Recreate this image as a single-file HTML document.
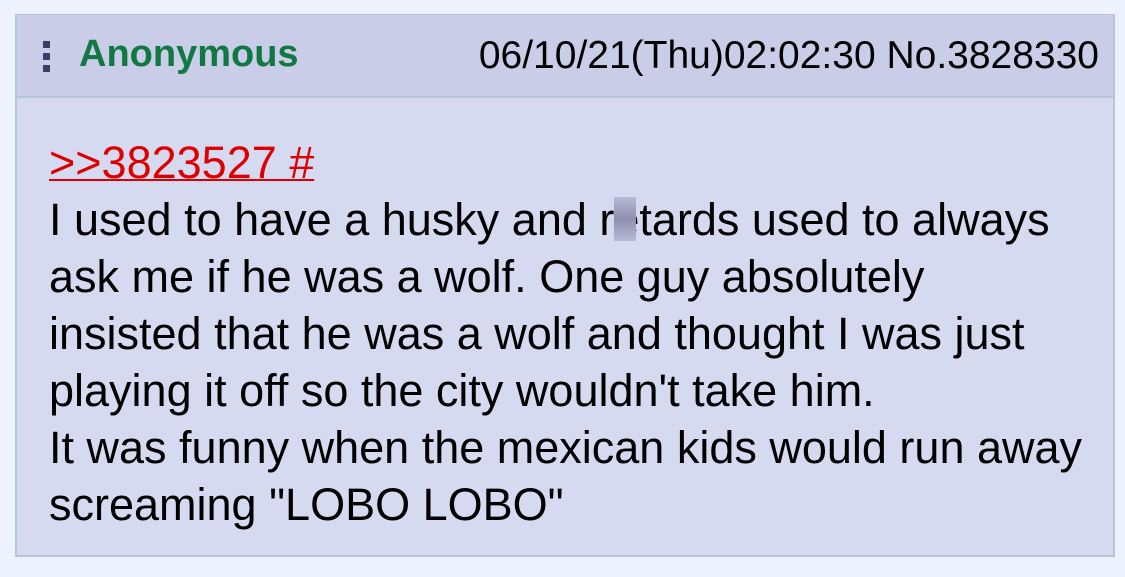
<!DOCTYPE html>
<html><head><style>
body{margin:0;width:1125px;height:577px;background:#eef2ff;font-family:"Liberation Sans",sans-serif;position:relative;overflow:hidden}
.box{position:absolute;left:15px;top:14px;width:1096px;height:540px;background:#d6daf0;border:2px solid #b7c5d9;border-top-width:1px}
.hdr{position:absolute;left:0;top:0;width:1096px;height:81px;background:#c9cde8;border-bottom:2px solid #b7c5d9}
.dots{position:absolute;left:26px;top:26px;width:7px}
.dots i{display:block;width:7px;height:7px;background:#3a3f66;margin-bottom:5px}
.name{position:absolute;left:62px;top:18px;font-weight:bold;color:#117743;font-size:38px}
.date{position:absolute;right:14px;top:19px;font-size:39px;color:#000}
.body{position:absolute;left:32px;top:119px;font-size:45px;line-height:57px;color:#000;white-space:pre}
.q{color:#d00;text-decoration:underline;text-decoration-thickness:2px}
.blur{position:absolute;left:597px;top:182px;width:22px;height:44px;background:linear-gradient(#b8bbd6,#8d90aa 50%,#b8bbd6)}
</style></head><body>
<div class="box">
<div class="hdr"><div class="dots"><i></i><i></i><i></i></div>
<div class="name">Anonymous</div>
<div class="date">06/10/21(Thu)02:02:30 No.3828330</div></div>
<div class="body"><span class="q">&gt;&gt;3823527 #</span>
I used to have a husky and retards used to always
ask me if he was a wolf. One guy absolutely
insisted that he was a wolf and thought I was just
playing it off so the city wouldn't take him.
It was funny when the mexican kids would run away
screaming "LOBO LOBO"</div>
<div class="blur"></div>
</div>
</body></html>
